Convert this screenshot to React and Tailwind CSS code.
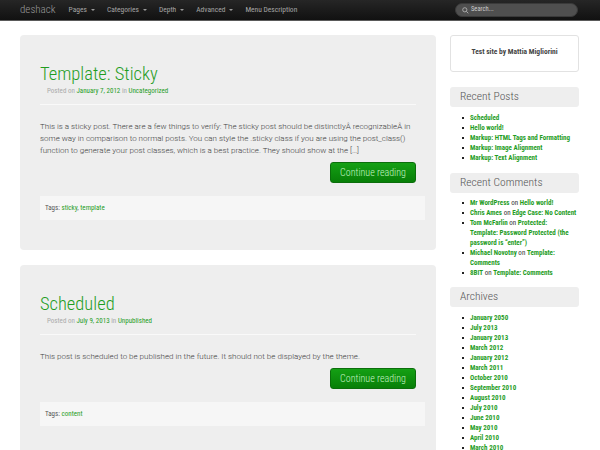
import React from 'react';

const cond = { fontFamily: '"Roboto Condensed", "Roboto", sans-serif' };
const body = { fontFamily: '"Roboto", "Noto Sans", sans-serif' };

const Caret = () => (
  <span className="inline-block ml-[4px] align-middle border-x-[2px] border-t-[2px] border-x-transparent border-t-[#999] w-0 h-0" />
);

const posts = [
  {
    title: 'Template: Sticky',
    date: 'January 7, 2012',
    cat: 'Uncategorized',
    text: 'This is a sticky post. There are a few things to verify: The sticky post should be distinctlyÂ recognizableÂ in some way in comparison to normal posts. You can style the .sticky class if you are using the post_class() function to generate your post classes, which is a best practice. They should show at the […]',
    tags: ['sticky', 'template'],
  },
  {
    title: 'Scheduled',
    date: 'July 9, 2013',
    cat: 'Unpublished',
    text: 'This post is scheduled to be published in the future. It should not be displayed by the theme.',
    tags: ['content'],
  },
];

const recentPosts = ['Scheduled', 'Hello world!', 'Markup: HTML Tags and Formatting', 'Markup: Image Alignment', 'Markup: Text Alignment'];

const archives = ['January 2050', 'July 2013', 'January 2013', 'March 2012', 'January 2012', 'March 2011', 'October 2010', 'September 2010', 'August 2010', 'July 2010', 'June 2010', 'May 2010', 'April 2010', 'March 2010'];

const Post = ({ post }) => (
  <article className="bg-[#eeeeee] rounded-[4px] px-[20px] pt-[27px] pb-[30px]">
    <h1 style={cond} className="text-[18.5px] leading-[24px] font-light text-[#1f9d1f]">{post.title}</h1>
    <div style={cond} className="text-[7px] leading-[9px] mt-[1px] ml-[7px] text-[#aaa]">
      Posted on <span className="text-[#1f9d1f]">{post.date}</span> in <span className="text-[#1f9d1f]">{post.cat}</span>
    </div>
    <div className="h-px bg-[#f9f9f9] mt-[8px] mb-[16px]" />
    <p style={body} className="text-[8px] leading-[12px] font-light text-[#3d3d3d] mr-[-16px]">{post.text}</p>
    <div className="flex justify-end mt-[5px]">
      <button style={cond} className="w-[86px] h-[21px] rounded-[3px] border border-[#0b6e0b] bg-gradient-to-b from-[#14a014] to-[#087f08] text-[10px] font-light text-[#c4f2c4]">
        Continue reading
      </button>
    </div>
    <div style={cond} className="mt-[13px] mr-[-9px] h-[24px] bg-[#f6f6f6] flex items-center px-[5px] text-[7px] text-[#555]">
      <span>
        Tags:{' '}
        {post.tags.map((t, i) => (
          <React.Fragment key={t}>
            <span className="text-[#1f9d1f]">{t}</span>{i < post.tags.length - 1 ? ', ' : ''}
          </React.Fragment>
        ))}
      </span>
    </div>
  </article>
);

const WidgetTitle = ({ children }) => (
  <div style={cond} className="h-[20px] bg-[#eeeeee] rounded-[3px] flex items-center px-[10px] text-[11.5px] font-light text-[#555]">
    {children}
  </div>
);

const Bullet = () => <span className="w-[2px] h-[2px] bg-[#222] shrink-0 mt-[4px] mr-[6px]" />;

const On = () => <span className="font-normal text-[#333]"> on </span>;

export default function App() {
  return (
    <div className="w-[600px] h-[450px] overflow-hidden bg-white">
      {/* Navbar */}
      <nav className="h-[21px] bg-gradient-to-b from-[#262626] to-[#111] border-b border-[#5a5a5a] flex items-center px-[20px]">
        <span style={cond} className="text-[11px] font-light text-[#9a9a9a] mr-[13px]">deshack</span>
        <div style={cond} className="flex items-center text-[7.5px] text-[#a5a5a5] gap-[12px]">
          <span>Pages<Caret /></span>
          <span>Categories<Caret /></span>
          <span>Depth<Caret /></span>
          <span>Advanced<Caret /></span>
          <span>Menu Description</span>
        </div>
        <div className="ml-auto w-[123px] h-[14px] rounded-full bg-[#4f4f4f] border border-[#3a3a3a] flex items-center pl-[6px] mr-[2px]">
          <svg width="7" height="7" viewBox="0 0 10 10" fill="none" stroke="#aaa" strokeWidth="1.4">
            <circle cx="4" cy="4" r="3" />
            <path d="M6.2 6.2 L9 9" />
          </svg>
          <span style={cond} className="ml-[2px] text-[6.5px] text-[#ccc]">Search...</span>
        </div>
      </nav>

      <div className="flex px-[20px] pt-[14px] gap-[14px]">
        <main className="w-[416px] flex flex-col gap-[15px] shrink-0">
          {posts.map(p => <Post key={p.title} post={p} />)}
        </main>

        <aside className="w-[129px] flex flex-col">
          <div style={cond} className="h-[37px] bg-white border border-[#e2e2e2] rounded-[3px] text-center text-[7.5px] font-bold text-[#444] pt-[10px]">
            Test site by Mattia Migliorini
          </div>

          <div className="mt-[15px]">
            <WidgetTitle>Recent Posts</WidgetTitle>
            <ul style={cond} className="mt-[6px] pl-[12px] text-[7px] leading-[10px] font-bold text-[#1f9d1f]">
              {recentPosts.map(r => (
                <li key={r} className="flex"><Bullet />{r}</li>
              ))}
            </ul>
          </div>

          <div className="mt-[10px]">
            <WidgetTitle>Recent Comments</WidgetTitle>
            <ul style={cond} className="mt-[5px] pl-[12px] text-[7px] leading-[10px] font-bold text-[#1f9d1f]">
              <li className="flex"><Bullet /><span>Mr WordPress<On />Hello world!</span></li>
              <li className="flex"><Bullet /><span>Chris Ames<On />Edge Case: No Content</span></li>
              <li className="flex"><Bullet /><span>Tom McFarlin<On />Protected:<br />Template: Password Protected (the password is “enter”)</span></li>
              <li className="flex"><Bullet /><span>Michael Novotny<On />Template: Comments</span></li>
              <li className="flex"><Bullet /><span>8BIT<On />Template: Comments</span></li>
            </ul>
          </div>

          <div className="mt-[9px]">
            <WidgetTitle>Archives</WidgetTitle>
            <ul style={cond} className="mt-[6px] pl-[12px] text-[7px] leading-[10px] font-bold text-[#1f9d1f]">
              {archives.map(a => (
                <li key={a} className="flex"><Bullet />{a}</li>
              ))}
            </ul>
          </div>
        </aside>
      </div>
    </div>
  );
}
